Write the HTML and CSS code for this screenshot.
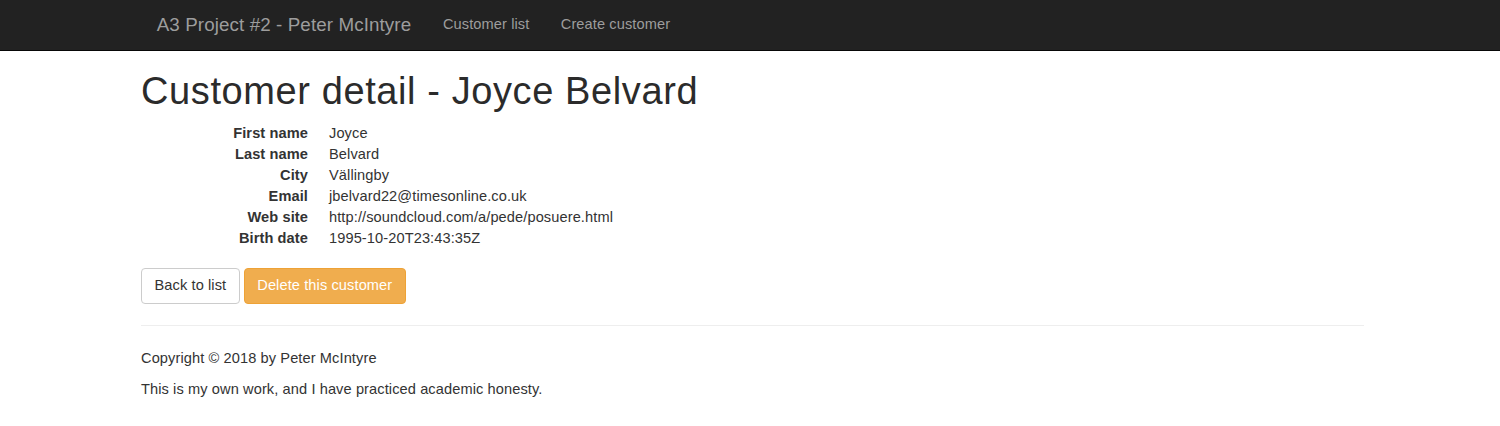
FILE: index.html
```html
<!DOCTYPE html>
<html lang="en">
<head>
<meta charset="utf-8">
<title>Customer detail - Joyce Belvard</title>
<link rel="stylesheet" href="styles.css">
</head>
<body>
<nav class="navbar">
  <div class="navbar-inner">
    <a class="brand" href="#">A3 Project #2 - Peter McIntyre</a>
    <a class="nav-link" href="#">Customer list</a>
    <a class="nav-link" href="#">Create customer</a>
  </div>
</nav>
<main class="container">
  <h1 class="title">Customer detail - Joyce Belvard</h1>
  <dl class="details">
    <dt>First name</dt><dd>Joyce</dd>
    <dt>Last name</dt><dd>Belvard</dd>
    <dt>City</dt><dd>Vällingby</dd>
    <dt>Email</dt><dd>jbelvard22@timesonline.co.uk</dd>
    <dt>Web site</dt><dd>http://soundcloud.com/a/pede/posuere.html</dd>
    <dt>Birth date</dt><dd>1995-10-20T23:43:35Z</dd>
  </dl>
  <div class="actions">
    <a class="btn btn-default" href="#">Back to list</a>
    <a class="btn btn-warning" href="#">Delete this customer</a>
  </div>
  <hr class="divider">
  <footer class="footer">
    <p>Copyright © 2018 by Peter McIntyre</p>
    <p>This is my own work, and I have practiced academic honesty.</p>
  </footer>
</main>
</body>
</html>
```

FILE: styles.css
```css
* { box-sizing: border-box; }
html, body { margin: 0; padding: 0; }
body {
  font-family: "Liberation Sans", Arial, Helvetica, sans-serif;
  font-size: 14.6px;
  line-height: 21px;
  letter-spacing: 0.1px;
  color: #333;
  background: #fff;
}
a { text-decoration: none; }

.navbar {
  background: #222;
  border-bottom: 1px solid #080808;
  height: 51px;
}
.navbar-inner {
  display: flex;
  align-items: center;
  height: 50px;
  padding-left: 141px;
  padding-bottom: 2px;
}
.brand {
  color: #9d9d9d;
  font-size: 18.8px;
  padding: 0 16px 0 15.7px;
  line-height: 21px;
}
.nav-link {
  color: #9d9d9d;
  font-size: 14.6px;
  padding: 0 15.7px;
}

.container {
  width: 1223px;
  margin-left: 141px;
}
.title {
  font-size: 38px;
  letter-spacing: 0.6px;
  font-weight: 500;
  line-height: 41px;
  margin: 20px 0 11px;
  color: #2b2b2b;
}
.details {
  display: grid;
  grid-template-columns: 167px 1fr;
  column-gap: 21px;
  margin: 0 0 19px;
}
.details dt {
  font-weight: bold;
  text-align: right;
}
.details dd { margin: 0; }

.actions {
  display: flex;
  gap: 4px;
}
.btn {
  display: inline-block;
  height: 35.5px;
  padding: 6.3px 12.5px;
  font-size: 14.6px;
  line-height: 21px;
  border: 1px solid transparent;
  border-radius: 4px;
}
.btn-default {
  color: #333;
  background: #fff;
  border-color: #ccc;
}
.btn-warning {
  color: #fff;
  background: #f0ad4e;
  border-color: #eea236;
}

.divider {
  border: 0;
  border-top: 1px solid #eee;
  margin: 21px 0 22px;
}
.footer p { margin: 0 0 10.5px; }
```
